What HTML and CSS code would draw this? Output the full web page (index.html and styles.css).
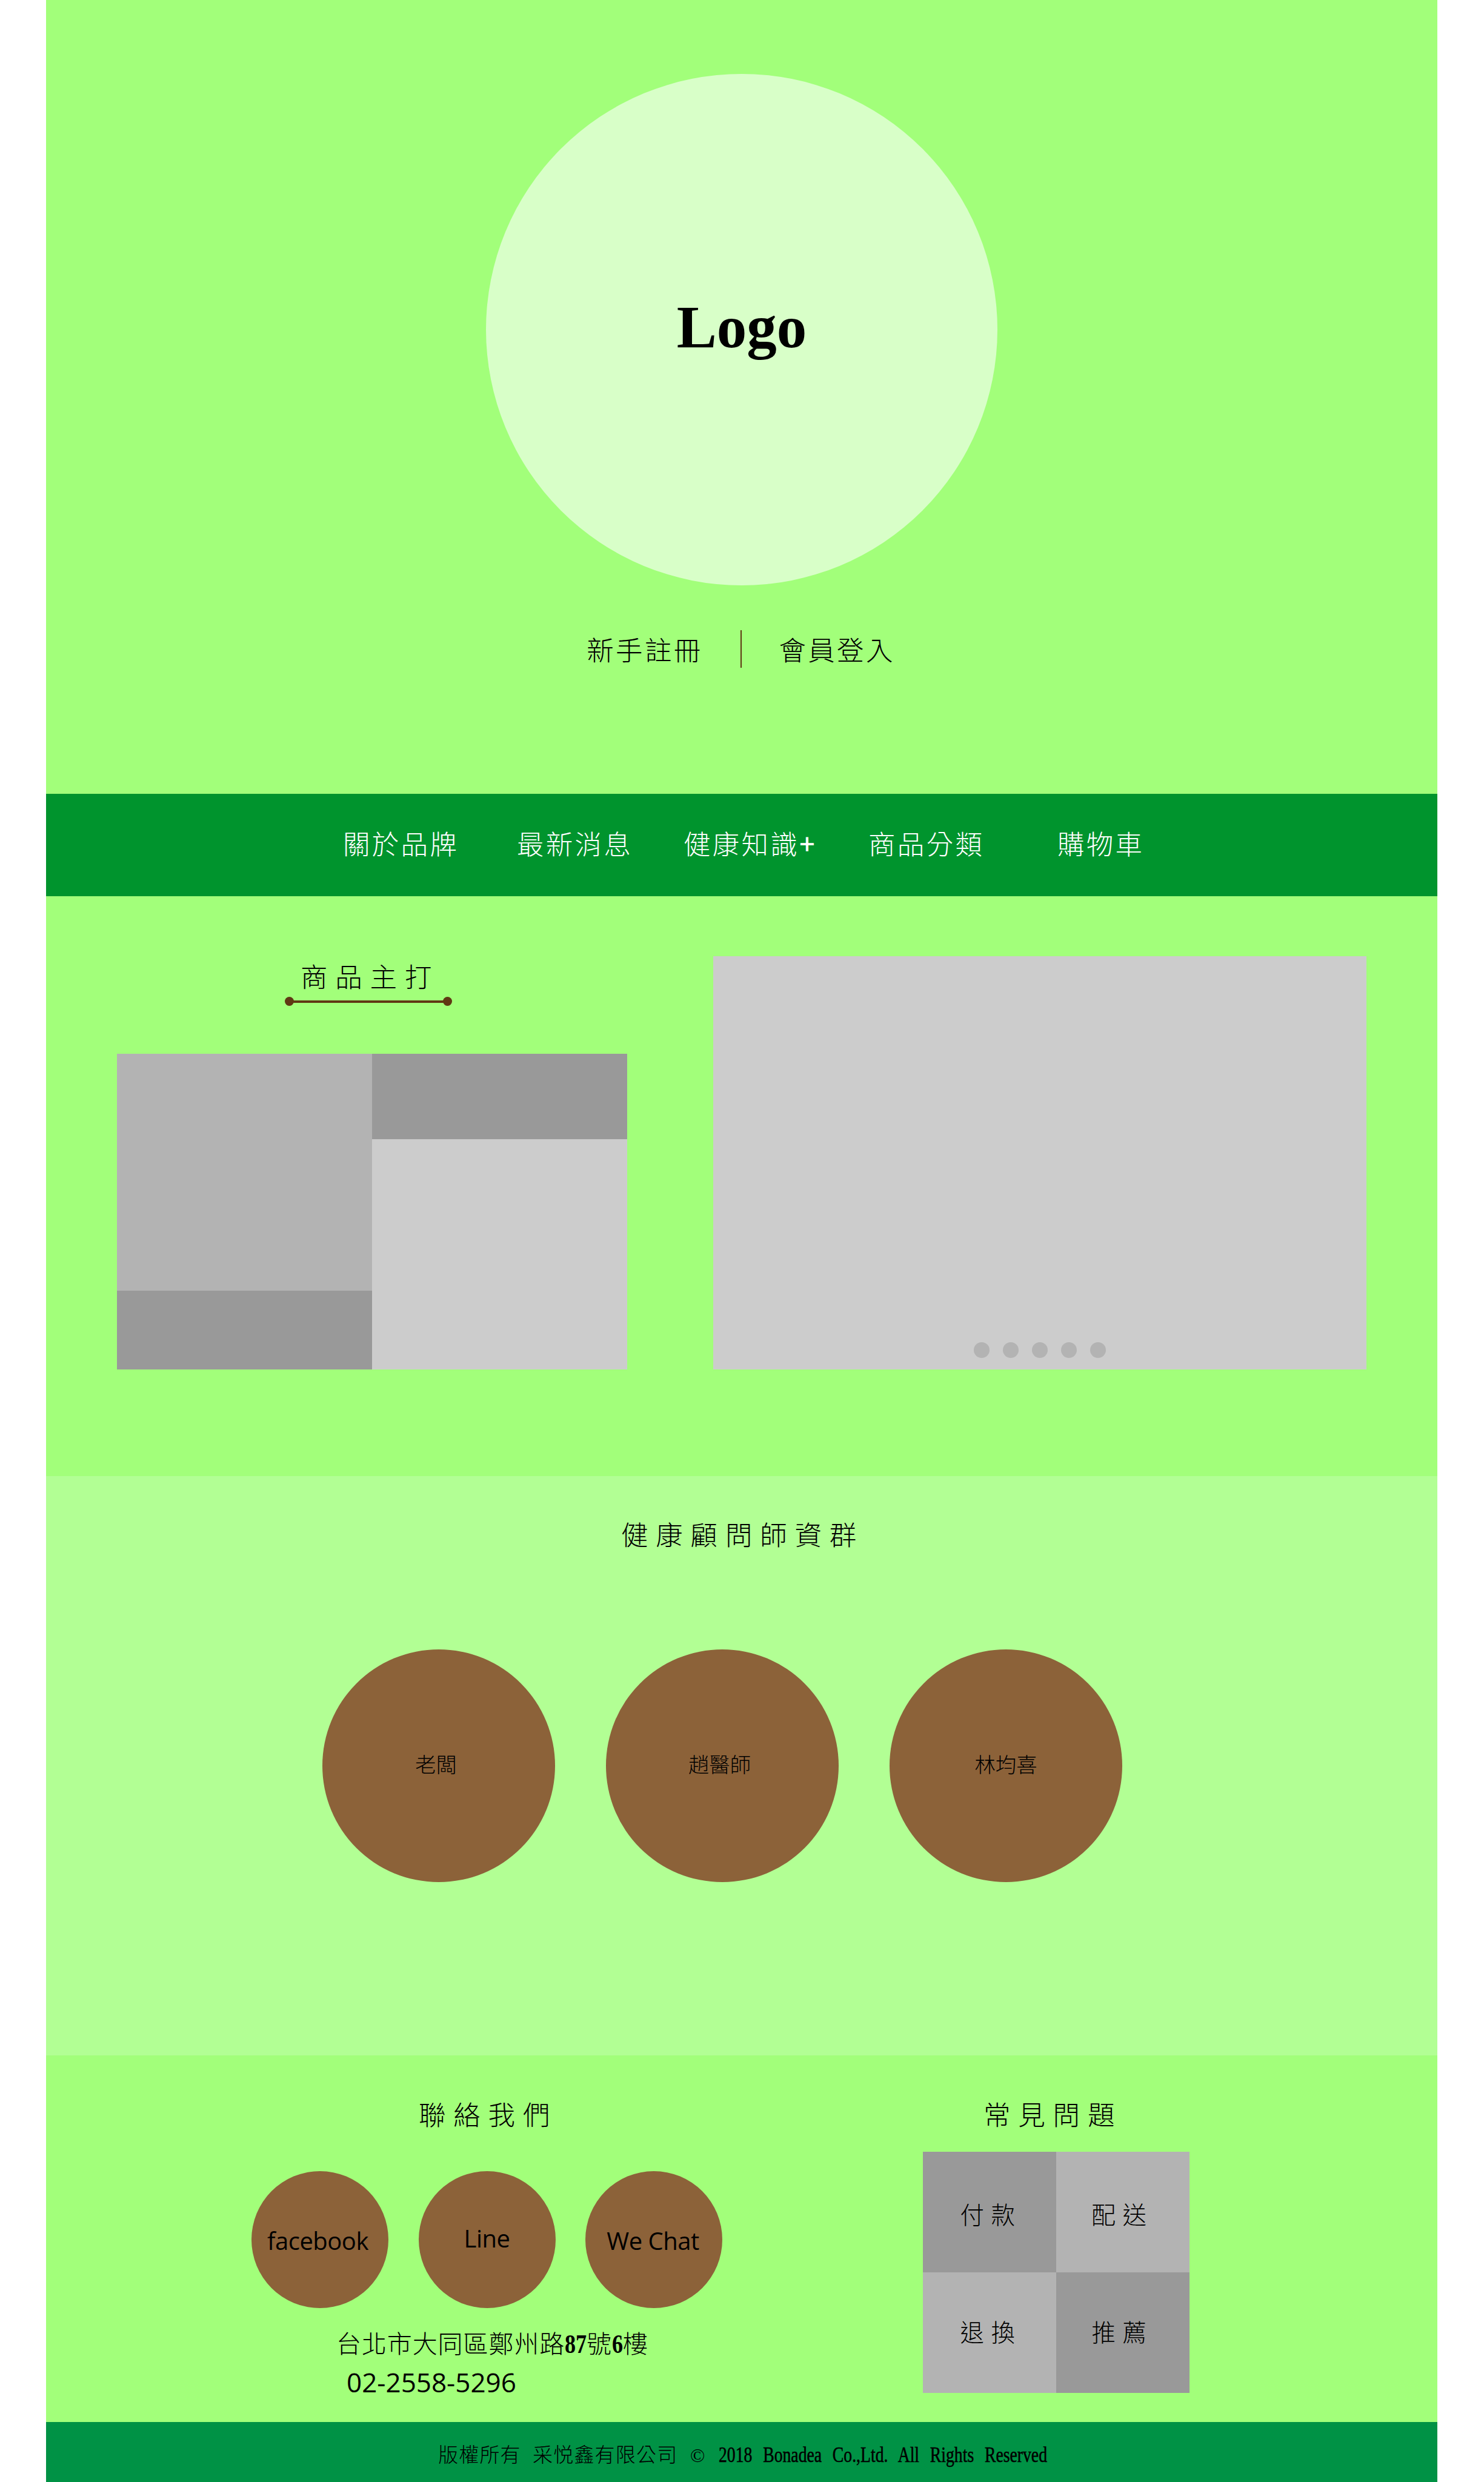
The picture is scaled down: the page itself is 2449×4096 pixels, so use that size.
FILE: index.html
```html
<!DOCTYPE html>
<html lang="zh-Hant">
<head>
<meta charset="utf-8">
<title>Bonadea</title>
<link rel="stylesheet" href="styles.css">
</head>
<body>
<div class="page">
  <header class="hero">
    <div class="logo">Logo</div>
    <div class="account">
      <a class="link">新手註冊</a>
      <span class="divider"></span>
      <a class="link">會員登入</a>
    </div>
  </header>
  <nav class="nav">
    <a class="link">關於品牌</a>
    <a class="link">最新消息</a>
    <a class="link">健康知識<b class="plus">+</b></a>
    <a class="link">商品分類</a>
    <a class="link">購物車</a>
  </nav>
  <section class="featured">
    <div class="products">
      <div class="products-title">
        <h2 class="title">商品主打</h2>
        <div class="rule"><span class="rule-dot"></span><span class="rule-line"></span><span class="rule-dot"></span></div>
      </div>
      <div class="tiles">
        <div class="tile-column">
          <div class="tile tile-large mid"></div>
          <div class="tile dark"></div>
        </div>
        <div class="tile-column">
          <div class="tile tile-short dark"></div>
          <div class="tile light"></div>
        </div>
      </div>
    </div>
    <div class="banner">
      <span class="dot"></span><span class="dot"></span><span class="dot"></span><span class="dot"></span><span class="dot"></span>
    </div>
  </section>
  <section class="advisors">
    <h2 class="title">健康顧問師資群</h2>
    <div class="advisor-list">
      <div class="advisor shift">老闆</div>
      <div class="advisor shift">趙醫師</div>
      <div class="advisor">林均喜</div>
    </div>
  </section>
  <section class="info">
    <div class="contact">
      <h2 class="title">聯絡我們</h2>
      <div class="socials">
        <a class="social facebook">facebook</a>
        <a class="social line">Line</a>
        <a class="social wechat">We Chat</a>
      </div>
      <p class="address">台北市大同區鄭州路<span class="num num-two"><b>87</b></span>號<span class="num"><b>6</b></span>樓</p>
      <p class="phone">02-2558-5296</p>
    </div>
    <div class="faq">
      <h2 class="title">常見問題</h2>
      <div class="faq-grid">
        <a class="faq-item dark upper">付款</a>
        <a class="faq-item mid upper right">配送</a>
        <a class="faq-item mid">退換</a>
        <a class="faq-item dark right">推薦</a>
      </div>
    </div>
  </section>
  <footer class="footer">
    <span class="owner">版權所有</span>
    <span class="company">采悦鑫有限公司</span>
    <span class="copy">©</span>
    <span class="rights"><span class="rights-text">2018 Bonadea Co.,Ltd. All Rights Reserved</span></span>
  </footer>
</div>
</body>
</html>
```
FILE: styles.css
```css
* { box-sizing: border-box; }

body {
  margin: 0;
  background: #fff;
  color: #000;
  font-family: "Noto Sans CJK TC", sans-serif;
  font-weight: 300;
}

h2, p { margin: 0; font-weight: 300; }

.page {
  width: 2296px;
  height: 4096px;
  margin-left: 76px;
  background: #a2ff7a;
  display: flex;
  flex-direction: column;
}

.dark { background: #999; }
.mid { background: #b3b3b3; }
.light { background: #ccc; }

.link {
  font-size: 44.5px;
  line-height: 60px;
  letter-spacing: 3.3px;
  white-space: nowrap;
}

.title {
  font-size: 44.5px;
  line-height: 60px;
  letter-spacing: 12.8px;
  white-space: nowrap;
}

/* Hero */
.hero {
  height: 1310px;
  padding-top: 122px;
  display: flex;
  flex-direction: column;
  align-items: center;
}
.logo {
  width: 844px;
  height: 844px;
  padding-bottom: 9px;
  border-radius: 50%;
  background: #d8ffc8;
  display: flex;
  align-items: center;
  justify-content: center;
  font: bold 99px/100px "Liberation Serif", serif;
}
.account {
  height: 62px;
  margin-top: 74px;
  padding-right: 3px;
  display: flex;
  align-items: center;
  gap: 62px;
}
.divider {
  width: 2px;
  height: 62px;
  background: #603813;
}

/* Navigation */
.nav {
  height: 169px;
  padding: 0 0 7px 490px;
  background: #00942d;
  color: #fff;
  display: grid;
  grid-template-columns: 287px 275px 305px 312px 150px;
  align-items: center;
}
.plus { font-weight: 500; }

/* Featured products and banner */
.featured {
  height: 957px;
  padding: 99px 0 0 117px;
  display: flex;
  gap: 142px;
}
.products { width: 842px; }
.products-title {
  width: 276px;
  margin: 2px 0 79px 277px;
}
.products-title .title { padding-left: 26px; }
.rule {
  margin-top: 5px;
  display: flex;
  align-items: center;
}
.rule-dot {
  width: 15px;
  height: 15px;
  border-radius: 50%;
  background: #603813;
}
.rule-line {
  flex: 1;
  height: 4px;
  margin: 0 -2px;
  background: #603813;
}
.tiles {
  height: 521px;
  display: flex;
}
.tile-column {
  flex: 1;
  display: flex;
  flex-direction: column;
}
.tile { flex: 1; }
.tile-large { flex: 0 0 391px; }
.tile-short { flex: 0 0 141px; }
.banner {
  width: 1078px;
  height: 682px;
  padding-bottom: 19px;
  background: #ccc;
  display: flex;
  align-items: flex-end;
  justify-content: center;
  gap: 22px;
}
.dot {
  width: 26px;
  height: 26px;
  border-radius: 50%;
  background: #b3b3b3;
}

/* Advisors */
.advisors {
  height: 956px;
  padding-top: 65px;
  background: #b2ff94;
}
.advisors .title { padding-left: 949px; }
.advisor-list {
  margin: 161px 0 0 456px;
  display: flex;
  gap: 84px;
}
.advisor {
  width: 384px;
  height: 384px;
  padding-bottom: 8px;
  border-radius: 50%;
  background: #8c6239;
  display: flex;
  align-items: center;
  justify-content: center;
  font-size: 34.4px;
}
.shift { padding-right: 9px; }

/* Contact and FAQ */
.info {
  height: 605px;
  padding: 66px 0 0 339px;
  display: flex;
}
.contact { width: 1108px; }
.contact .title { padding-left: 276px; }
.socials {
  margin-top: 65px;
  display: flex;
  gap: 49.5px;
}
.social {
  width: 226px;
  height: 226px;
  border-radius: 50%;
  background: #8c6239;
  display: flex;
  align-items: center;
  justify-content: center;
  font: 400 40px/50px "Open Sans", "Noto Sans", sans-serif;
  letter-spacing: -0.5px;
}
.facebook { padding: 3px 7px 0 0; }
.line { padding-bottom: 5px; }
.wechat { padding: 3px 3px 0 0; }
.address {
  margin: 31px 0 0 140px;
  font-size: 41px;
  line-height: 50px;
  letter-spacing: 0.9px;
  white-space: nowrap;
}
.num {
  display: inline-block;
  width: 18px;
}
.num-two { width: 36px; }
.num b {
  display: inline-block;
  font: bold 44px/50px "Liberation Serif", serif;
  letter-spacing: 0;
  transform: scaleX(0.82);
  transform-origin: left;
}
.phone {
  margin: 12px 0 0 157px;
  font: 400 44px/50px "Open Sans", "Noto Sans", sans-serif;
}
.faq { width: 440px; }
.faq .title { padding-left: 100px; }
.faq-grid {
  height: 398px;
  margin-top: 33px;
  display: grid;
  grid-template: 1fr 1fr / 1fr 1fr;
}
.faq-item {
  padding: 0 0 6px 5px;
  display: flex;
  align-items: center;
  justify-content: center;
  font-size: 39.5px;
  letter-spacing: 11.5px;
}
.upper { padding: 4px 0 0 5px; }
.right { padding-left: 0; padding-right: 1px; }

/* Footer */
.footer {
  height: 99px;
  padding: 27px 0 0 647px;
  background: #009245;
  display: flex;
  align-items: baseline;
  font-size: 33px;
  line-height: 50px;
  letter-spacing: 1.2px;
  white-space: nowrap;
}
.owner { width: 156px; }
.company { width: 260px; }
.copy {
  width: 47px;
  font: 32px/50px "Liberation Serif", serif;
}
.rights {
  width: 541px;
  font: 400 36px/50px "Liberation Serif", serif;
  letter-spacing: 0;
}
.rights-text {
  display: inline-block;
  word-spacing: 14px;
  transform: scaleX(0.77);
  transform-origin: left;
  -webkit-text-stroke: 0.6px #000;
}
```
